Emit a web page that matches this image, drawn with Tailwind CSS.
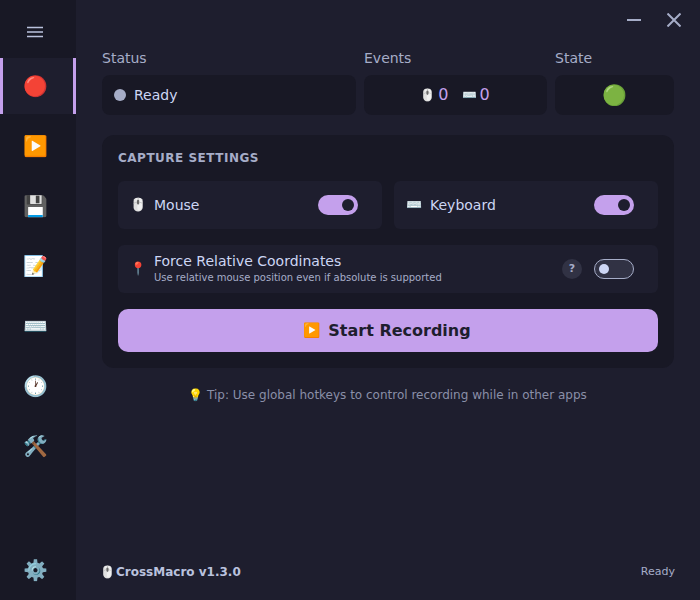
<!DOCTYPE html>
<html><head><meta charset="utf-8">
<script src="https://cdn.jsdelivr.net/npm/@tailwindcss/browser@4"></script>
</head>
<body class="m-0">
<div class="w-[700px] h-[600px] flex overflow-hidden bg-[#1e1e2e] font-['DejaVu_Sans',sans-serif] text-[#cdd6f4]">
  <aside class="w-[76px] h-full bg-[#181825] flex flex-col">
    <div class="h-[58px] flex items-center justify-center pr-[6px]">
      <svg width="16" height="12" viewBox="0 0 16 12" class="mt-[6px]"><path d="M0 1.5H16M0 6H16M0 10.5H16" stroke="#bac2de" stroke-width="1.6"/></svg>
    </div>
    <div class="flex flex-col gap-[4px]">
      <div class="h-[56px] flex items-center justify-center bg-[#1e1e2e] border-x-[3px] border-[#c4a0ec] text-[20px] pr-[6px]">🔴</div>
      <div class="h-[56px] flex items-center justify-center text-[20px] pr-[6px]">▶️</div>
      <div class="h-[56px] flex items-center justify-center text-[20px] pr-[6px]">💾</div>
      <div class="h-[56px] flex items-center justify-center text-[20px] pr-[6px]">📝</div>
      <div class="h-[56px] flex items-center justify-center text-[20px] pr-[6px]">⌨️</div>
      <div class="h-[56px] flex items-center justify-center text-[20px] pr-[6px]">🕐</div>
      <div class="h-[56px] flex items-center justify-center text-[20px] pr-[6px]">🛠️</div>
    </div>
    <div class="mt-auto h-[60px] flex items-center justify-center text-[20px] pr-[6px]">⚙️</div>
  </aside>
  <main class="flex-1 flex flex-col px-[26px] relative">
    <div class="h-[50px] flex items-start justify-end gap-[26px] pt-[13px] -mr-[7px]">
      <svg width="14" height="14" viewBox="0 0 14 14"><path d="M0 7H14" stroke="#a6adc8" stroke-width="2"/></svg>
      <svg width="14" height="14" viewBox="0 0 14 14"><path d="M0.5 0.5L13.5 13.5M13.5 0.5L0.5 13.5" stroke="#a6adc8" stroke-width="2"/></svg>
    </div>
    <div class="grid grid-cols-[254px_183px_119px] gap-x-[8px]">
      <div class="text-[14px] leading-[17px] text-[#a6adc8] mb-[8px]">Status</div>
      <div class="text-[14px] leading-[17px] text-[#a6adc8] mb-[8px]">Events</div>
      <div class="text-[14px] leading-[17px] text-[#a6adc8] mb-[8px]">State</div>
      <div class="h-[40px] rounded-[8px] bg-[#181825] flex items-center px-[12px] gap-[8px] text-[14px]">
        <span class="w-[12px] h-[12px] rounded-full bg-[#a6adc8]"></span><span>Ready</span>
      </div>
      <div class="h-[40px] rounded-[8px] bg-[#181825] flex items-center justify-center gap-[13px] pr-[1px] text-[16px] text-[#c4a0ec]">
        <span class="flex items-center gap-[3px]"><span class="text-[12px]">🖱️</span>0</span>
        <span class="flex items-center gap-[3px]"><span class="text-[12px]">⌨️</span>0</span>
      </div>
      <div class="h-[40px] rounded-[8px] bg-[#181825] flex items-center justify-center text-[20px]">🟢</div>
    </div>
    <section class="mt-[20px] h-[233px] rounded-[12px] bg-[#181825] p-[16px] flex flex-col">
      <h2 class="text-[12px] leading-[14px] font-bold tracking-[0.5px] text-[#a6adc8] mb-[16px]">CAPTURE SETTINGS</h2>
      <div class="grid grid-cols-2 gap-[12px]">
        <div class="h-[48px] rounded-[6px] bg-[#1e1e2e] flex items-center pl-[12px] pr-[24px] text-[14px]">
          <span class="w-[24px] text-[13px]">🖱️</span><span>Mouse</span>
          <span class="ml-auto w-[40px] h-[20px] rounded-full bg-[#c4a0ec] flex items-center justify-end pr-[4px]"><span class="w-[12px] h-[12px] rounded-full bg-[#1e1e2e]"></span></span>
        </div>
        <div class="h-[48px] rounded-[6px] bg-[#1e1e2e] flex items-center pl-[12px] pr-[24px] text-[14px]">
          <span class="w-[24px] text-[13px]">⌨️</span><span>Keyboard</span>
          <span class="ml-auto w-[40px] h-[20px] rounded-full bg-[#c4a0ec] flex items-center justify-end pr-[4px]"><span class="w-[12px] h-[12px] rounded-full bg-[#1e1e2e]"></span></span>
        </div>
      </div>
      <div class="mt-[16px] h-[48px] rounded-[6px] bg-[#1e1e2e] flex items-center pl-[12px] pr-[24px]">
        <span class="w-[24px] text-[13px]">📍</span>
        <div class="flex flex-col">
          <span class="text-[14px] leading-[17px] -mt-[1px] mb-[1px]">Force Relative Coordinates</span>
          <span class="text-[10px] leading-[13px] text-[#a6adc8]">Use relative mouse position even if absolute is supported</span>
        </div>
        <span class="ml-auto w-[20px] h-[20px] rounded-full bg-[#313244] flex items-center justify-center text-[11px] font-bold text-[#a6adc8]">?</span>
        <span class="ml-[12px] w-[40px] h-[20px] rounded-full bg-[#313244] border border-[#a6adc8] flex items-center pl-[4px]"><span class="w-[10px] h-[10px] rounded-full bg-[#cdd6f4]"></span></span>
      </div>
      <button class="mt-[16px] h-[43px] rounded-[10px] bg-[#c4a0ec] flex items-center justify-center gap-[8px] pr-[2px] text-[#1e1e2e] text-[16px] font-bold">
        <span class="text-[14px]">▶️</span><span>Start Recording</span>
      </button>
    </section>
    <p class="mt-[20px] mr-[1px] text-center text-[12px] leading-[15px] text-[#8a8fa8]">💡 Tip: Use global hotkeys to control recording while in other apps</p>
    <footer class="mt-auto h-[56px] flex items-center justify-between text-[11px] -mr-[1px]">
      <span class="font-bold text-[12px] text-[#bac2de] flex items-center gap-[1px] -ml-[2px]"><span>🖱️</span><span>CrossMacro v1.3.0</span></span>
      <span class="text-[#a6adc8]">Ready</span>
    </footer>
  </main>
</div>
</body></html>
